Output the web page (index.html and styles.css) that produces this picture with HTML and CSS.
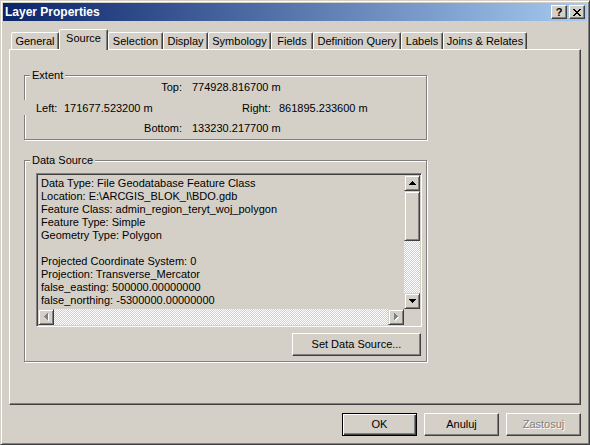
FILE: index.html
```html
<!DOCTYPE html>
<html>
<head>
<meta charset="utf-8">
<title>Layer Properties</title>
<link rel="stylesheet" href="styles.css">
</head>
<body>
<div class="window">
  <div class="titlebar">
    <span class="title">Layer Properties</span>
    <div class="tbtns">
      <div class="tbtn"><span class="qmark">?</span></div>
      <div class="tbtn">
        <svg width="8" height="7" viewBox="0 0 8 7" shape-rendering="crispEdges"><path fill="#000" d="M0 0h2v1H0zM6 0h2v1H6zM1 1h2v1H1zM5 1h2v1H5zM2 2h4v1H2zM3 3h2v1H3zM2 4h4v1H2zM1 5h2v1H1zM5 5h2v1H5zM0 6h2v1H0zM6 6h2v1H6z"/></svg>
      </div>
    </div>
  </div>

  <div class="tabs">
    <div class="tab t-general">General</div>
    <div class="tab t-source selected">Source</div>
    <div class="tab t-selection">Selection</div>
    <div class="tab t-display">Display</div>
    <div class="tab t-symbology">Symbology</div>
    <div class="tab t-fields">Fields</div>
    <div class="tab t-defq">Definition Query</div>
    <div class="tab t-labels">Labels</div>
    <div class="tab t-joins">Joins &amp; Relates</div>
  </div>

  <div class="panel">
    <div class="group extent">
      <div class="legend">Extent</div>
      <div class="row r1">
        <span class="lbl-r">Top:</span><span class="val">774928.816700 m</span>
      </div>
      <div class="row r2">
        <span class="lbl-left">Left:</span><span class="val-left">171677.523200 m</span><span class="lbl-right">Right:</span><span>861895.233600 m</span>
      </div>
      <div class="row r3">
        <span class="lbl-r">Bottom:</span><span class="val">133230.217700 m</span>
      </div>
    </div>

    <div class="group datasource">
      <div class="legend">Data Source</div>
      <div class="textbox">
        <div class="text">
          <div class="line">Data Type: File Geodatabase Feature Class</div>
          <div class="line">Location: E:\ARCGIS_BLOK_I\BDO.gdb</div>
          <div class="line">Feature Class: admin_region_teryt_woj_polygon</div>
          <div class="line">Feature Type: Simple</div>
          <div class="line">Geometry Type: Polygon</div>
          <div class="line blank"></div>
          <div class="line">Projected Coordinate System: 0</div>
          <div class="line">Projection: Transverse_Mercator</div>
          <div class="line">false_easting: 500000.00000000</div>
          <div class="line">false_northing: -5300000.00000000</div>
        </div>
        <div class="vscroll">
          <div class="sbtn">
            <svg width="7" height="4" viewBox="0 0 7 4" shape-rendering="crispEdges"><path fill="#000" d="M3 0h1v1H3zM2 1h3v1H2zM1 2h5v1H1zM0 3h7v1H0z"/></svg>
          </div>
          <div class="thumb"></div>
          <div class="track"></div>
          <div class="sbtn">
            <svg width="7" height="4" viewBox="0 0 7 4" shape-rendering="crispEdges"><path fill="#000" d="M0 0h7v1H0zM1 1h5v1H1zM2 2h3v1H2zM3 3h1v1H3z"/></svg>
          </div>
        </div>
        <div class="hscroll">
          <div class="sbtn">
            <svg width="5" height="8" viewBox="0 0 5 8" shape-rendering="crispEdges"><path fill="#fff" d="M4 1h1v7H4zM3 2h1v5H3zM2 3h1v3H2zM1 4h1v1H1z"/><path fill="#808080" d="M3 0h1v7H3zM2 1h1v5H2zM1 2h1v3H1zM0 3h1v1H0z"/></svg>
          </div>
          <div class="track"></div>
          <div class="sbtn">
            <svg width="5" height="8" viewBox="0 0 5 8" shape-rendering="crispEdges"><path fill="#fff" d="M1 1h1v7H1zM2 2h1v5H2zM3 3h1v3H3zM4 4h1v1H4z"/><path fill="#808080" d="M0 0h1v7H0zM1 1h1v5H1zM2 2h1v3H2zM3 3h1v1H3z"/></svg>
          </div>
        </div>
        <div class="corner"></div>
      </div>
      <button class="btn btn-set">Set Data Source...</button>
    </div>
  </div>

  <div class="footer">
    <button class="btn default">OK</button>
    <button class="btn">Anuluj</button>
    <button class="btn disabled">Zastosuj</button>
  </div>
</div>
</body>
</html>
```

FILE: styles.css
```css
html, body {
  margin: 0;
  padding: 0;
  background: #d4d0c8;
}

body {
  font-family: "Liberation Sans", Arial, sans-serif;
  font-size: 11px;
  line-height: 13px;
  color: #000;
}

.window {
  width: 590px;
  height: 445px;
  box-sizing: border-box;
  border: 1px solid;
  border-color: #d4d0c8 #404040 #404040 #d4d0c8;
  box-shadow: inset 1px 1px #fff, inset -1px -1px #808080;
  padding: 2px;
  background: #d4d0c8;
  display: flex;
  flex-direction: column;
}

/* Title bar */
.titlebar {
  height: 18px;
  flex: none;
  display: flex;
  align-items: center;
  justify-content: space-between;
  padding: 0 2px;
  background: linear-gradient(to right, #0a246a, #a6caf0);
}

.title {
  color: #fff;
  font-weight: bold;
  font-size: 12px;
  line-height: 18px;
}

.tbtns {
  display: flex;
  gap: 2px;
}

.tbtn {
  width: 16px;
  height: 14px;
  box-sizing: border-box;
  border: 1px solid;
  border-color: #fff #404040 #404040 #fff;
  box-shadow: inset -1px -1px #808080;
  background: #d4d0c8;
  display: flex;
  align-items: center;
  justify-content: center;
}

.qmark {
  font-weight: bold;
  font-size: 11px;
  line-height: 11px;
  margin-top: 1px;
}

/* Tabs */
.tabs {
  flex: none;
  height: 20px;
  margin-top: 8px;
  padding-left: 8px;
  display: flex;
  align-items: flex-end;
}

.tab {
  box-sizing: border-box;
  height: 17px;
  border: 1px solid;
  border-bottom: 0;
  border-color: #fff #404040 transparent #fff;
  border-radius: 2px 2px 0 0;
  box-shadow: inset -1px 0 #808080;
  padding-top: 2px;
  text-align: center;
  white-space: nowrap;
  background: #d4d0c8;
}

.tab.selected {
  height: 21px;
  margin-bottom: -1px;
  position: relative;
  z-index: 1;
}

.t-general { width: 48px; }
.t-source { width: 49px; }
.t-selection { width: 55px; }
.t-display { width: 45px; }
.t-symbology { width: 63px; }
.t-fields { width: 42px; }
.t-defq { width: 88px; }
.t-labels { width: 42px; }
.t-joins { width: 84px; }

/* Panel */
.panel {
  flex: none;
  margin: 0 6px;
  height: 356px;
  box-sizing: border-box;
  border: 1px solid;
  border-color: #fff #404040 #404040 #fff;
  box-shadow: inset -1px -1px #808080;
  padding: 25px 0 0 14px;
}

.group {
  width: 403px;
  box-sizing: border-box;
  border: 1px solid #808080;
  box-shadow: inset 1px 1px #fff, 1px 1px #fff;
}

.legend {
  width: max-content;
  margin: -7px 0 -6px 5px;
  padding: 0 2px;
  background: #d4d0c8;
}

/* Extent */
.extent {
  height: 65px;
}

.row {
  display: flex;
  white-space: nowrap;
}

.r1 { margin-top: 5px; }
.r3 { margin-top: 7px; }

.lbl-r {
  width: 157px;
  text-align: right;
}

.val {
  margin-left: 10px;
}

.r2 {
  margin: 6px 0 0 -1px;
  padding: 2px 0 0 12px;
  background: #d4d0c8;
}

.lbl-left { width: 28px; }
.val-left { width: 178px; }
.lbl-right { width: 37px; }

/* Data source */
.datasource {
  margin-top: 20px;
  height: 202px;
}

.textbox {
  margin: 12px 0 0 11px;
  width: 386px;
  height: 154px;
  box-sizing: border-box;
  border: 1px solid;
  border-color: #808080 #fff #fff #808080;
  padding: 1px;
  box-shadow: inset 1px 1px #404040, inset -1px -1px #d4d0c8;
  display: grid;
  grid-template-columns: 1fr 16px;
  grid-template-rows: 1fr 16px;
}

.text {
  padding: 2px 0 0 3px;
  overflow: hidden;
  white-space: nowrap;
}

.line { height: 13px; }

.vscroll {
  display: flex;
  flex-direction: column;
}

.hscroll {
  display: flex;
}

.sbtn {
  flex: none;
  width: 16px;
  height: 16px;
  box-sizing: border-box;
  border: 1px solid;
  border-color: #d4d0c8 #404040 #404040 #d4d0c8;
  box-shadow: inset 1px 1px #fff, inset -1px -1px #808080;
  background: #d4d0c8;
  display: flex;
  align-items: center;
  justify-content: center;
}

.thumb {
  flex: none;
  height: 50px;
  box-sizing: border-box;
  border: 1px solid;
  border-color: #d4d0c8 #404040 #404040 #d4d0c8;
  box-shadow: inset 1px 1px #fff, inset -1px -1px #808080;
  background: #d4d0c8;
}

.track {
  flex: 1;
  background: repeating-conic-gradient(#fff 0 25%, #d4d0c8 0 50%) 0 0 / 2px 2px;
}

.corner {
  background: #d4d0c8;
}

/* Buttons */
.btn {
  appearance: none;
  margin: 0;
  padding: 0;
  box-sizing: border-box;
  width: 75px;
  height: 23px;
  border: 1px solid;
  border-color: #fff #404040 #404040 #fff;
  box-shadow: inset -1px -1px #808080;
  background: #d4d0c8;
  font: inherit;
  line-height: 13px;
  color: #000;
  display: flex;
  align-items: center;
  justify-content: center;
}

.btn.default {
  border-color: #000;
  box-shadow: inset 1px 1px #fff, inset -1px -1px #404040, inset -2px -2px #808080;
}

.btn.disabled {
  color: #808080;
  text-shadow: 1px 1px #fff;
}

.btn-set {
  width: 129px;
  margin: 6px 0 0 267px;
}

.footer {
  flex: none;
  display: flex;
  justify-content: flex-end;
  gap: 7px;
  padding: 8px 6px 0 0;
}
```
